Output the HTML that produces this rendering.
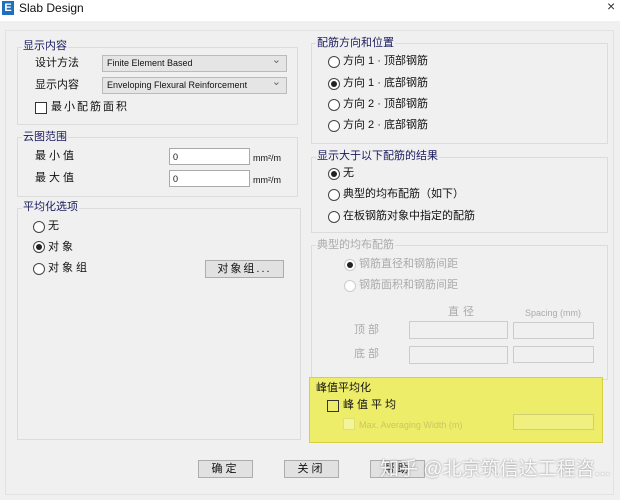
<!DOCTYPE html>
<html><head><meta charset="utf-8"><style>
*{margin:0;padding:0;box-sizing:border-box}
body{width:620px;height:500px;background:#f0f0f0;position:relative;overflow:hidden;font-family:"Liberation Sans","Noto Sans CJK SC",sans-serif;font-size:11px;color:#111}
.a{position:absolute}
.title{left:0;top:0;width:620px;height:21px;background:#fff}
.gb{position:absolute;border:1px solid #dcdcdc;}
.lg{position:absolute;background:#f0f0f0;padding:0 1px;font-size:11px;color:#1a1a60;line-height:12px}
.cb{position:absolute;width:12px;height:12px;border:1px solid #333;background:#fff}
.rb{position:absolute;width:12px;height:12px;border:1px solid #444;border-radius:50%;background:#fff}
.rb.on::after{content:"";position:absolute;left:2px;top:2px;width:6px;height:6px;border-radius:50%;background:#222}
.in{position:absolute;border:1px solid #aaa;background:#fff;font-size:9px;padding-left:3px;line-height:16px}
.dis{border-color:#ccc;background:#f0f0f0}
.sel{position:absolute;border:1px solid #bbb;background:#e5e5e5;font-size:9px;padding-left:4px;line-height:15px}
.sel::after{content:"⌄";position:absolute;right:5px;top:-3px;font-size:11px;color:#666}
.btn{position:absolute;border:1px solid #adadad;background:#e1e1e1;text-align:center;font-size:11px;line-height:16px}
.t{position:absolute;font-size:11px;line-height:13px;white-space:nowrap}
.g{color:#aaa}
</style></head><body>
<div class="a title"></div>
<div class="a" style="left:2px;top:1px;width:12px;height:14px;background:#1e6fc0;color:#fff;font-weight:bold;font-size:11px;text-align:center;line-height:14px">E</div>
<div class="t" style="left:19px;top:2px;font-size:12px">Slab Design</div>
<div class="t" style="left:607px;top:0px;font-size:14px;color:#333">×</div>
<div class="gb" style="left:5px;top:30px;width:609px;height:465px;border-color:#e2e2e2"></div>

<div class="gb" style="left:17px;top:47px;width:281px;height:78px"></div>
<div class="lg" style="left:22px;top:40px">显示内容</div>
<div class="t" style="left:35px;top:57px">设计方法</div>
<div class="sel" style="left:102px;top:55px;width:185px;height:17px">Finite Element Based</div>
<div class="t" style="left:35px;top:79px">显示内容</div>
<div class="sel" style="left:102px;top:77px;width:185px;height:17px">Enveloping Flexural Reinforcement</div>
<div class="cb" style="left:35px;top:102px"></div>
<div class="t" style="left:51px;top:101px;letter-spacing:2px">最小配筋面积</div>

<div class="gb" style="left:17px;top:137px;width:281px;height:60px"></div>
<div class="lg" style="left:22px;top:131px">云图范围</div>
<div class="t" style="left:35px;top:150px;letter-spacing:3px">最小值</div>
<div class="in" style="left:169px;top:148px;width:81px;height:17px">0</div>
<div class="t" style="left:253px;top:152px;font-size:9px">mm²/m</div>
<div class="t" style="left:35px;top:172px;letter-spacing:3px">最大值</div>
<div class="in" style="left:169px;top:170px;width:81px;height:17px">0</div>
<div class="t" style="left:253px;top:174px;font-size:9px">mm²/m</div>

<div class="gb" style="left:17px;top:208px;width:284px;height:232px"></div>
<div class="lg" style="left:22px;top:201px">平均化选项</div>
<div class="rb" style="left:33px;top:221px"></div><div class="t" style="left:48px;top:220px">无</div>
<div class="rb on" style="left:33px;top:241px"></div><div class="t" style="left:48px;top:241px;letter-spacing:3px">对象</div>
<div class="rb" style="left:33px;top:263px"></div><div class="t" style="left:48px;top:262px;letter-spacing:3px">对象组</div>
<div class="btn" style="left:205px;top:260px;width:79px;height:18px;letter-spacing:2px">对象组...</div>

<div class="gb" style="left:311px;top:43px;width:297px;height:101px"></div>
<div class="lg" style="left:316px;top:37px">配筋方向和位置</div>
<div class="rb" style="left:328px;top:56px"></div><div class="t" style="left:343px;top:55px">方向 1 · 顶部钢筋</div>
<div class="rb on" style="left:328px;top:78px"></div><div class="t" style="left:343px;top:77px">方向 1 · 底部钢筋</div>
<div class="rb" style="left:328px;top:99px"></div><div class="t" style="left:343px;top:98px">方向 2 · 顶部钢筋</div>
<div class="rb" style="left:328px;top:120px"></div><div class="t" style="left:343px;top:119px">方向 2 · 底部钢筋</div>

<div class="gb" style="left:311px;top:157px;width:297px;height:76px"></div>
<div class="lg" style="left:316px;top:150px">显示大于以下配筋的结果</div>
<div class="rb on" style="left:328px;top:168px"></div><div class="t" style="left:343px;top:167px">无</div>
<div class="rb" style="left:328px;top:189px"></div><div class="t" style="left:343px;top:188px">典型的均布配筋（如下）</div>
<div class="rb" style="left:328px;top:211px"></div><div class="t" style="left:343px;top:210px">在板钢筋对象中指定的配筋</div>

<div class="gb" style="left:311px;top:245px;width:297px;height:135px"></div>
<div class="lg g" style="left:316px;top:239px">典型的均布配筋</div>
<div class="rb on" style="left:344px;top:259px;border-color:#ccc"></div><div class="t g" style="left:359px;top:258px">钢筋直径和钢筋间距</div>
<div class="rb" style="left:344px;top:280px;border-color:#ccc"></div><div class="t g" style="left:359px;top:279px">钢筋面积和钢筋间距</div>
<div class="t g" style="left:448px;top:306px;letter-spacing:4px">直径</div>
<div class="t g" style="left:525px;top:307px;font-size:9px">Spacing (mm)</div>
<div class="t g" style="left:354px;top:324px;letter-spacing:3px">顶部</div>
<div class="in dis" style="left:409px;top:321px;width:99px;height:18px"></div>
<div class="in dis" style="left:513px;top:322px;width:81px;height:17px"></div>
<div class="t g" style="left:354px;top:348px;letter-spacing:3px">底部</div>
<div class="in dis" style="left:409px;top:346px;width:99px;height:18px"></div>
<div class="in dis" style="left:513px;top:346px;width:81px;height:17px"></div>

<div class="a" style="left:309px;top:377px;width:294px;height:66px;background:#eded6a;border:1px solid #d8d040"></div>
<div class="t" style="left:316px;top:382px">峰值平均化</div>
<div class="cb" style="left:327px;top:400px;background:transparent"></div>
<div class="t" style="left:343px;top:399px;letter-spacing:3px">峰值平均</div>
<div class="cb" style="left:343px;top:418px;border-color:#e0e070;background:#f4f49a"></div>
<div class="t" style="left:359px;top:419px;font-size:9px;color:#c8c860">Max. Averaging Width (m)</div>
<div class="a" style="left:513px;top:414px;width:81px;height:16px;border:1px solid #d0d070;background:#f0f080"></div>

<div class="btn" style="left:198px;top:460px;width:55px;height:18px;letter-spacing:3px">确定</div>
<div class="btn" style="left:284px;top:460px;width:55px;height:18px;letter-spacing:3px">关闭</div>
<div class="btn" style="left:370px;top:460px;width:55px;height:18px;letter-spacing:3px">帮助</div>
<div class="t" style="left:380px;top:459px;font-size:19px;line-height:22px;color:rgba(255,255,255,0.9);text-shadow:0 0 2px #888">知乎 @北京筑信达工程咨...</div>
</body></html>
